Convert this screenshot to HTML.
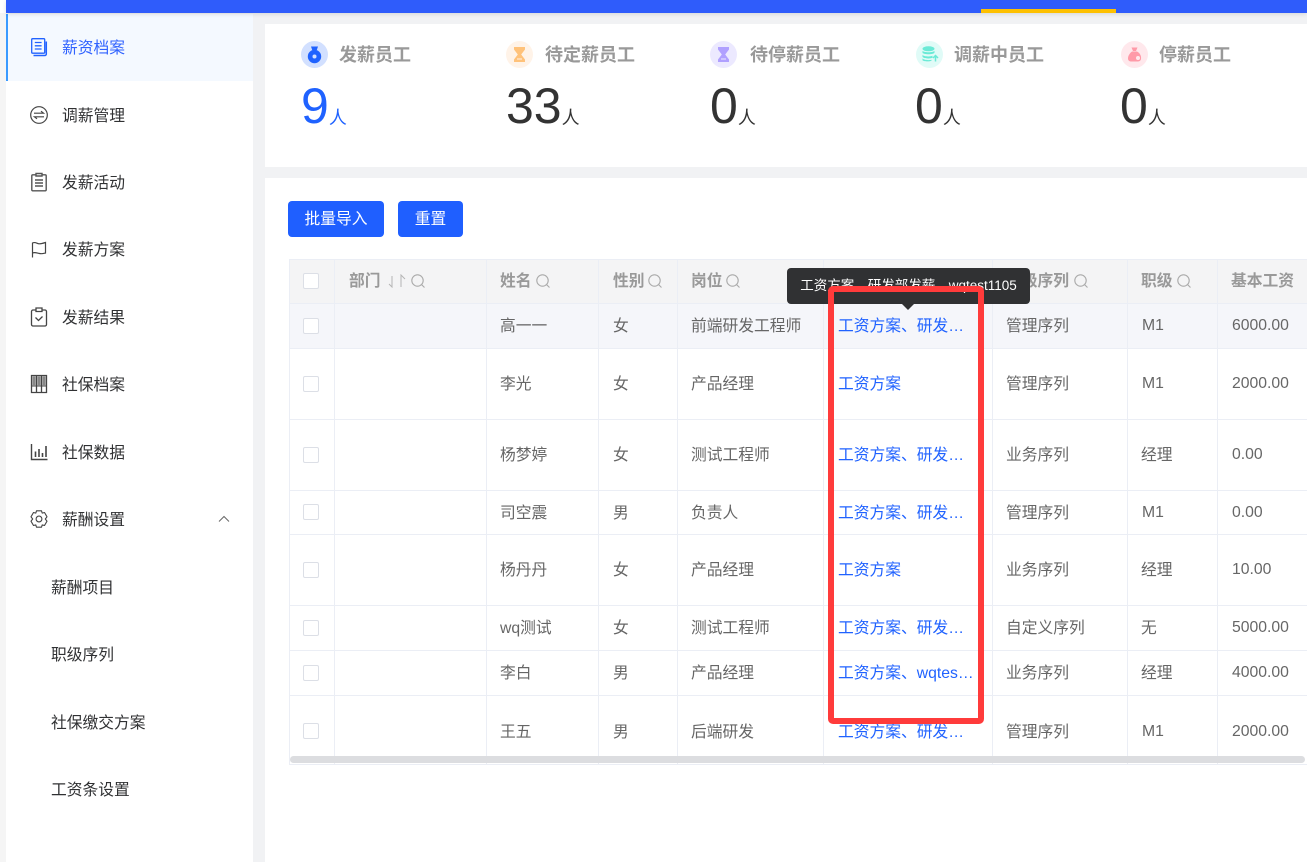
<!DOCTYPE html>
<html lang="zh-CN">
<head>
<meta charset="utf-8">
<title>薪资档案</title>
<style>
*{box-sizing:border-box}
html,body{margin:0;padding:0}
body{width:1307px;height:862px;overflow:hidden;position:relative;background:#f1f2f4;font-family:"Liberation Sans","Noto Sans CJK SC",sans-serif;color:#303133}
.abs{position:absolute}
#strip{left:0;top:0;width:6px;height:862px;background:#f5f5f5}
#strip2{left:0;top:0;width:6px;height:13px;background:#fff}
#bar{left:6px;top:0;width:1301px;height:13px;background:#2f5cfb;box-shadow:0 1px 5px rgba(0,0,0,.12);z-index:3}
#yellow{left:981px;top:9px;width:135px;height:4px;background:#fdc000;z-index:4}
#side{left:6px;top:14px;width:247px;height:848px;background:#fff}
#active{left:6px;top:14px;width:247px;height:67px;background:#f4f9ff;border-left:2px solid #3a9aff}
.mi{position:absolute;left:62px;font-size:15.75px;line-height:24px;height:24px;white-space:nowrap;color:#303133}
.sub{left:51px}
.ic{position:absolute;left:29px;width:20px;height:20px;overflow:visible}
.card{background:#fff;position:absolute;left:265px;width:1042px}
.circ{position:absolute;width:27px;height:27px;top:41px}
.tt{position:absolute;top:42px;font-size:18px;line-height:26px;font-weight:700;color:#999;white-space:nowrap}
.num{position:absolute;top:76px;font-size:50px;line-height:60px;color:#333;white-space:nowrap}
.num span{font-size:18px;line-height:18px;position:relative;top:1px}
.btn{position:absolute;top:201px;height:36px;background:#1f5fff;border-radius:4px;color:#fff;font-size:15.75px;line-height:38px;text-align:center}
#wrap{left:289px;top:259px;width:1018px;height:506px;overflow:hidden;border-bottom:1px solid #ebeef5}
#topline{left:289px;top:259px;width:1018px;height:1px;background:#ebeef5;z-index:2}
table{border-collapse:collapse;table-layout:fixed;width:1018px;position:absolute;left:0;top:0}
td,th{border-right:1px solid #ebeef5;border-bottom:1px solid #ebeef5;padding:0 0 2px 14px;font-size:15.75px;text-align:left;white-space:nowrap;overflow:hidden;font-weight:400;color:#666}
td:nth-child(3),td:nth-child(5),td:nth-child(7),td:nth-child(8),td:nth-child(9),th:nth-child(3),th:nth-child(5),th:nth-child(7),th:nth-child(8),th:nth-child(9){padding-left:13px}
td:first-child,th:first-child{border-left:1px solid #ebeef5;padding:0 0 0 13px}
td.n{padding:1px 0 0 14px}
th{background:#f4f4f5;color:#999;font-weight:700}
tr.hv td{background:#f5f6fa}
.cb{display:block;width:16px;height:16px;border:1px solid #dcdfe6;border-radius:2px;background:#fff}
.lk{display:block;width:137px;overflow:hidden;text-overflow:ellipsis;color:#2062ff}
.q{display:inline-block;vertical-align:-2px;margin-left:3px}
#sb{left:290px;top:756px;width:1015px;height:7px;background:#dcdde0;border-radius:4px;z-index:3}
#tip{left:787px;top:268px;width:243px;height:36px;background:#303133;border-radius:4px;color:#fff;font-size:13.5px;line-height:36px;text-align:center;white-space:nowrap;z-index:5}
#arr{left:902px;top:304px;width:0;height:0;border-left:6px solid transparent;border-right:6px solid transparent;border-top:6px solid #303133;z-index:5}
#red{left:828px;top:286px;width:156px;height:438px;border:6px solid #ff3b3b;border-radius:5px;z-index:6}
</style>
</head>
<body>
<div class="abs" id="strip"></div>
<div class="abs" id="strip2"></div>
<div class="abs" id="bar"></div>
<div class="abs" id="yellow"></div>
<div class="abs" id="side"></div>
<div class="abs" id="active"></div>

<svg class="ic" style="top:37px" viewBox="0 0 20 20" fill="none" stroke="#2062ff" stroke-width="1.300"><rect x="2.700" y="1.700" width="13" height="14.500" rx="1"/><path d="M17.300 4.500v12.500a1.500 1.500 0 0 1-1.500 1.500H4.500" stroke-width="1.500"/><path d="M5.800 5.500h6.800M5.800 8.800h6.800M5.800 12h6.800"/></svg>
<div class="mi" style="top:37px;color:#2f62ff">薪资档案</div>

<svg class="ic" style="top:104.500px" viewBox="0 0 20 20" fill="none" stroke="#444" stroke-width="1.200"><circle cx="10" cy="10" r="8.300"/><path d="M5 8.200h9.500l-2.500-2M15 11.800H5.500l2.500 2"/></svg>
<div class="mi" style="top:105px">调薪管理</div>

<svg class="ic" style="top:172px" viewBox="0 0 20 20" fill="none" stroke="#555" stroke-width="1.400"><rect x="2.800" y="2.800" width="14.400" height="16" rx="1"/><path d="M7 1.500h6v2.500H7z" fill="#fff"/><path d="M6 8h8M6 11h8M6 14h8"/></svg>
<div class="mi" style="top:172px">发薪活动</div>

<svg class="ic" style="top:240px" viewBox="0 0 20 20" fill="none" stroke="#444" stroke-width="1.200"><path d="M3.500 17.500V3c3-1.500 4.500.8 6.500.8 2 0 4-.5 6.500-1.300V13c-2.500.6-3.500 1-6 .5-3-.6-4.500-1.500-7-.5"/></svg>
<div class="mi" style="top:239px">发薪方案</div>

<svg class="ic" style="top:307px" viewBox="0 0 20 20" fill="none" stroke="#444" stroke-width="1.300"><path d="M7 3H4a1.500 1.500 0 0 0-1.500 1.500v13A1.500 1.500 0 0 0 4 19h12a1.500 1.500 0 0 0 1.500-1.500v-13A1.500 1.500 0 0 0 16 3h-3"/><path d="M7 1h6v3.500H7z"/><path d="M6.500 10.500l3 3 4-4"/></svg>
<div class="mi" style="top:307px">发薪结果</div>

<svg class="ic" style="top:374px" viewBox="0 0 20 20" fill="none" stroke="#444" stroke-width="1.300"><path d="M2.500 1.500h15v17h-15z"/><path d="M7.500 1.500v17M12.500 1.500v17"/><path d="M2.500 12h15" stroke-width="1"/><path d="M5 2.200v9M10 2.200v9M15 2.200v9" stroke="#888" stroke-width="3.200"/></svg>
<div class="mi" style="top:374px">社保档案</div>

<svg class="ic" style="top:442px" viewBox="0 0 20 20" fill="none" stroke="#444" stroke-width="1.400"><path d="M2.500 2V17.500h16"/><path d="M6.500 15V9.500M10 15V7M13.500 15v-4M17 15V4" stroke-width="1.600"/></svg>
<div class="mi" style="top:442px">社保数据</div>

<svg class="ic" style="top:509px" viewBox="0 0 20 20" fill="none" stroke="#444" stroke-width="1.100"><path d="M7.500 1.800h5l.7 2.300 2.300-.6 2.500 4.300-1.700 2.200 1.700 2.200-2.500 4.300-2.300-.6-.7 2.300h-5l-.7-2.300-2.300.6-2.500-4.300 1.700-2.200-1.700-2.200 2.500-4.300 2.300.6z" stroke-linejoin="round"/><circle cx="10" cy="10" r="2.900"/></svg>
<div class="mi" style="top:509px">薪酬设置</div>
<svg class="abs" style="left:218px;top:515px" width="12" height="8" viewBox="0 0 12 8" fill="none" stroke="#666" stroke-width="1"><path d="M1 6.500l5-5 5 5"/></svg>

<div class="mi sub" style="top:577px">薪酬项目</div>
<div class="mi sub" style="top:644px">职级序列</div>
<div class="mi sub" style="top:712px">社保缴交方案</div>
<div class="mi sub" style="top:779px">工资条设置</div>

<div class="card" style="top:24px;height:143px"></div>
<div class="card" style="top:178px;height:684px"></div>

<svg class="circ" style="left:301px" viewBox="0 0 27 27"><circle cx="13.500" cy="13.500" r="13.500" fill="#d2e0ff"/><path d="M10 5.500h7l-1.200 3.500h-4.600z" fill="#1f62ff"/><circle cx="13.500" cy="15.500" r="6.700" fill="#1f62ff"/><circle cx="13.500" cy="15.500" r="2" fill="#d2e0ff"/></svg>
<div class="tt" style="left:339px">发薪员工</div>
<div class="num" style="left:301px;color:#1f62ff">9<span>人</span></div>

<svg class="circ" style="left:506px" viewBox="0 0 27 27"><circle cx="13.500" cy="13.500" r="13.500" fill="#fff3e8"/><path d="M8 6h11v2.500L15.200 13.500 19 18.500V21H8v-2.500l3.800-5L8 8.500z" fill="#ffc27a"/><path d="M11 18h5" stroke="#fff3e8"/></svg>
<div class="tt" style="left:545px">待定薪员工</div>
<div class="num" style="left:506px">33<span>人</span></div>

<svg class="circ" style="left:710px" viewBox="0 0 27 27"><circle cx="13.500" cy="13.500" r="13.500" fill="#ece9ff"/><path d="M8 6h11v2.500L15.200 13.500 19 18.500V21H8v-2.500l3.800-5L8 8.500z" fill="#b0a0ff"/><path d="M11 18h5" stroke="#ece9ff"/></svg>
<div class="tt" style="left:750px">待停薪员工</div>
<div class="num" style="left:710px">0<span>人</span></div>

<svg class="circ" style="left:916px" viewBox="0 0 27 27"><circle cx="13.500" cy="13.500" r="13.500" fill="#e0fbf7"/><ellipse cx="12.500" cy="7.800" rx="6" ry="2.500" fill="#6aead6"/><path d="M6.500 9.800c1 2 11 2 12 0v2c-1 2-11 2-12 0zM6.500 13.800c1 2 8 2 10 1v2c-2 1-9 1-10-1zM6.500 17.300c1 2 7 2 9 1.500v1c-2 1-8 .8-9-.5z" fill="#6aead6"/><path d="M19.500 20.500v-6m-2.500 2.500l2.500-2.500 2.500 2.500" stroke="#6aead6" stroke-width="1.500" fill="none"/></svg>
<div class="tt" style="left:954px">调薪中员工</div>
<div class="num" style="left:915px">0<span>人</span></div>

<svg class="circ" style="left:1121px" viewBox="0 0 27 27"><circle cx="13.500" cy="13.500" r="13.500" fill="#ffe8ec"/><path d="M10.500 6.500h6l-1.500 3.500h-3z" fill="#ff9aa8"/><path d="M11 10.500h5c3 1.500 4.500 4.500 4 7.500-.3 2-2 2.500-3.500 2.500h-6c-2 0-3.500-1-3.500-3 0-3 2-5.500 4-7z" fill="#ff9aa8"/><circle cx="17" cy="17" r="2" fill="#ffe8ec"/></svg>
<div class="tt" style="left:1159px">停薪员工</div>
<div class="num" style="left:1120px">0<span>人</span></div>

<div class="btn" style="left:288px;width:96px">批量导入</div>
<div class="btn" style="left:398px;width:65px">重置</div>

<div class="abs" id="topline"></div>
<div class="abs" id="wrap">
<table>
<colgroup><col style="width:45px"><col style="width:152px"><col style="width:112px"><col style="width:79px"><col style="width:146px"><col style="width:169px"><col style="width:135px"><col style="width:90px"><col style="width:90px"></colgroup>
<tr style="height:44px">
<th><span class="cb"></span></th>
<th>部门 <svg class="q" style="margin-left:2px" width="20" height="14" viewBox="0 0 20 14" fill="none" stroke="#b5b5b5" stroke-width="1"><path d="M5 2v11L2 10M14 13V1l4 4"/></svg><svg class="q" style="margin-left:4px" width="14" height="14" viewBox="0 0 14 14" fill="none" stroke="#aaa" stroke-width="1.100"><circle cx="6.500" cy="6.500" r="5.700"/><path d="M10.500 10.500l3 3"/></svg></th>
<th>姓名<svg class="q" style="margin-left:4px" width="14" height="14" viewBox="0 0 14 14" fill="none" stroke="#aaa" stroke-width="1.100"><circle cx="6.500" cy="6.500" r="5.700"/><path d="M10.500 10.500l3 3"/></svg></th>
<th>性别<svg class="q" width="14" height="14" viewBox="0 0 14 14" fill="none" stroke="#aaa" stroke-width="1.100"><circle cx="6.500" cy="6.500" r="5.700"/><path d="M10.500 10.500l3 3"/></svg></th>
<th>岗位<svg class="q" width="14" height="14" viewBox="0 0 14 14" fill="none" stroke="#aaa" stroke-width="1.100"><circle cx="6.500" cy="6.500" r="5.700"/><path d="M10.500 10.500l3 3"/></svg></th>
<th>薪资方案</th>
<th>职级序列<svg class="q" style="margin-left:5px" width="14" height="14" viewBox="0 0 14 14" fill="none" stroke="#aaa" stroke-width="1.100"><circle cx="6.500" cy="6.500" r="5.700"/><path d="M10.500 10.500l3 3"/></svg></th>
<th>职级<svg class="q" style="margin-left:4px" width="14" height="14" viewBox="0 0 14 14" fill="none" stroke="#aaa" stroke-width="1.100"><circle cx="6.500" cy="6.500" r="5.700"/><path d="M10.500 10.500l3 3"/></svg></th>
<th>基本工资</th>
</tr>
<tr class="hv" style="height:45px"><td><span class="cb"></span></td><td></td><td>高一一</td><td>女</td><td>前端研发工程师</td><td><span class="lk">工资方案、研发部发薪、wqtest1105</span></td><td>管理序列</td><td class="n">M1</td><td class="n">6000.00</td></tr>
<tr style="height:71px"><td><span class="cb"></span></td><td></td><td>李光</td><td>女</td><td>产品经理</td><td><span class="lk">工资方案</span></td><td>管理序列</td><td class="n">M1</td><td class="n">2000.00</td></tr>
<tr style="height:71px"><td><span class="cb"></span></td><td></td><td>杨梦婷</td><td>女</td><td>测试工程师</td><td><span class="lk">工资方案、研发部发薪</span></td><td>业务序列</td><td>经理</td><td class="n">0.00</td></tr>
<tr style="height:44px"><td><span class="cb"></span></td><td></td><td>司空震</td><td>男</td><td>负责人</td><td><span class="lk">工资方案、研发部发薪</span></td><td>管理序列</td><td class="n">M1</td><td class="n">0.00</td></tr>
<tr style="height:71px"><td><span class="cb"></span></td><td></td><td>杨丹丹</td><td>女</td><td>产品经理</td><td><span class="lk">工资方案</span></td><td>业务序列</td><td>经理</td><td class="n">10.00</td></tr>
<tr style="height:45px"><td><span class="cb"></span></td><td></td><td>wq测试</td><td>女</td><td>测试工程师</td><td><span class="lk">工资方案、研发部发薪</span></td><td>自定义序列</td><td>无</td><td class="n">5000.00</td></tr>
<tr style="height:45px"><td><span class="cb"></span></td><td></td><td>李白</td><td>男</td><td>产品经理</td><td><span class="lk">工资方案、wqtest1105</span></td><td>业务序列</td><td>经理</td><td class="n">4000.00</td></tr>
<tr style="height:72px"><td><span class="cb"></span></td><td></td><td>王五</td><td>男</td><td>后端研发</td><td><span class="lk">工资方案、研发部发薪</span></td><td>管理序列</td><td class="n">M1</td><td class="n">2000.00</td></tr>
</table>
</div>
<div class="abs" id="sb"></div>

<div class="abs" id="tip">工资方案、研发部发薪、wqtest1105</div>
<div class="abs" id="arr"></div>
<div class="abs" id="red"></div>
</body>
</html>
